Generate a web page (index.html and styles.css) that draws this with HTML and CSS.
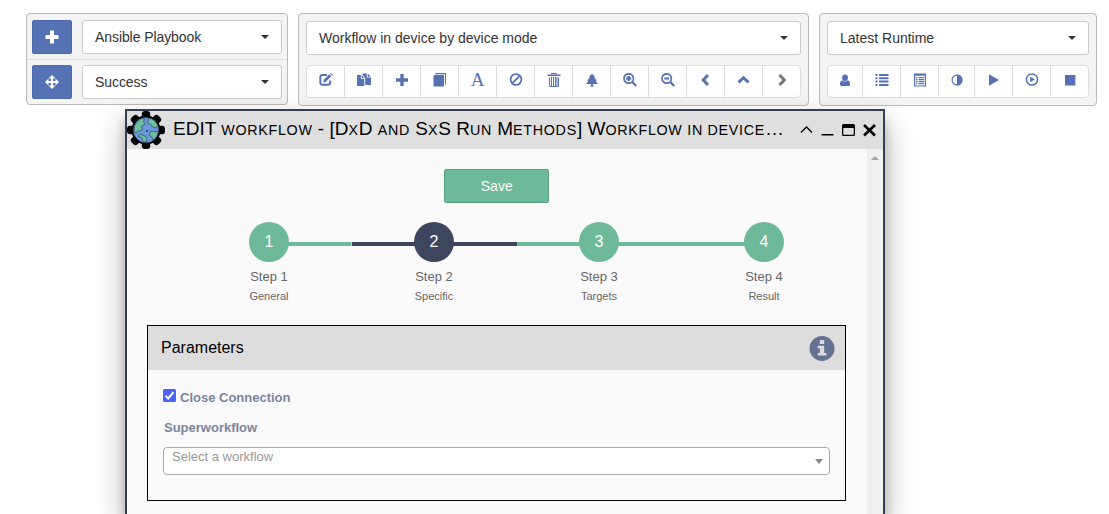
FILE: index.html
```
<!DOCTYPE html>
<html lang="en">
<head>
<meta charset="utf-8">
<title>Edit workflow</title>
<link rel="stylesheet" href="styles.css">
</head>
<body>
<div class="toolbar">
  <section class="panel panel-creation">
    <div class="row">
      <button class="primary"><svg width="14" height="14" viewBox="0 0 14 14"><path d="M5 .5h4V5h4.500v4H9v4.500H5V9H.5V5H5z"/></svg></button>
      <div class="select">Ansible Playbook<i class="caret"></i></div>
    </div>
    <div class="row">
      <button class="primary"><svg width="14" height="14" viewBox="0 0 14 14"><path d="M7 0l3.500 3.500H8V6h2.500V3.500L14 7l-3.500 3.500V8H8v2.500h2.500L7 14l-3.500-3.500H6V8H3.500v2.500L0 7l3.500-3.500V6H6V3.500H3.500z"/></svg></button>
      <div class="select">Success<i class="caret"></i></div>
    </div>
  </section>

  <section class="panel panel-workflow">
    <div class="select">Workflow in device by device mode<i class="caret"></i></div>
    <div class="group">
      <button><svg width="14" height="14" viewBox="0 0 14 14"><path class="line" stroke-width="1.900" d="M8 2H3.500Q1.300 2 1.300 4v5.500q0 2.200 2.200 2.200h5.500q2.200 0 2.200-2.200V7.500"/><path d="M4.800 6.800L10.300 1.300l2 2L6.800 8.800l-2.600.6zM11 .6l.9-.6L14 1.900l-.9.9z"/></svg></button>
      <button><svg width="14" height="14" viewBox="0 0 14 14"><path d="M0 2h3.800v3.800h3.500V13H0zM4.600 2.200L7.200 5H4.600zM5.500.5h4.300v4H14V12H8.200V5L5.500 2zM10.700.5L14 3.700h-3.300z"/></svg></button>
      <button><svg width="14" height="14" viewBox="0 0 14 14"><path d="M5.300 1h3.400v4.300H13v3.400H8.700V13H5.300V8.700H1V5.300h4.300z"/></svg></button>
      <button><svg width="14" height="14" viewBox="0 0 14 14"><path d="M2.200 0H13v11.500h-1V1.200H2.200zM.5 3q0-1 1-1H11v11.500H1.500q-1 0-1-1z"/></svg></button>
      <button class="letter">A</button>
      <button><svg width="14" height="14" viewBox="0 0 14 14"><circle class="line" cx="7" cy="6.500" r="5.400" stroke-width="1.800"/><path class="line" stroke-width="1.800" d="M3.300 10.200l7.400-7.400"/></svg></button>
      <button><svg width="14" height="14" viewBox="0 0 14 14"><path class="line" stroke-width="1" d="M4.500 1.500V.5h5v1M2.500 4.500V13q0 .5.500.5h8q.5 0 .5-.5V4.500M4.500 4v9M6.500 4v9M8.500 4v9M10 4v9"/><path d="M.5 1.600h13V3H.5z"/></svg></button>
      <button><svg width="14" height="14" viewBox="0 0 14 14"><path d="M7 .5l3.300 3.800H9l3 3.500h-1.500L13 11H8v1.500l1.500 1h-5l1.500-1V11H1l2.500-3.200H2l3-3.500H3.700z"/></svg></button>
      <button><svg width="14" height="14" viewBox="0 0 14 14"><circle class="line" cx="5.700" cy="5.500" r="4.700" stroke-width="1.700"/><path class="line" stroke-width="2.200" d="M9.200 9l4 4"/><path d="M4.500 3h2.400v1.300h1.300v2.400H6.900V8H4.500V6.700H3.200V4.300h1.300z"/></svg></button>
      <button><svg width="14" height="14" viewBox="0 0 14 14"><circle class="line" cx="5.700" cy="5.500" r="4.700" stroke-width="1.700"/><path class="line" stroke-width="2.200" d="M9.200 9l4 4M3.300 5.500h4.800"/></svg></button>
      <button><svg width="14" height="14" viewBox="0 0 14 14"><path class="line" stroke-width="3" d="M9 2L4.200 7 9 12"/></svg></button>
      <button><svg width="14" height="14" viewBox="0 0 14 14"><path class="line" stroke-width="3" d="M1.500 9.300l5-4.600 5 4.600"/></svg></button>
      <button class="muted"><svg width="14" height="14" viewBox="0 0 14 14"><path class="line" stroke-width="3" d="M4.500 2l4.800 5-4.800 5"/></svg></button>
    </div>
  </section>

  <section class="panel panel-runtime">
    <div class="select">Latest Runtime<i class="caret"></i></div>
    <div class="group">
      <button><svg width="14" height="14" viewBox="0 0 14 14"><ellipse cx="7" cy="4.700" rx="2.900" ry="3.200"/><path d="M4.200 7.200q2.800 2.400 5.600 0 2.200.5 2.200 3.300v1q0 1.500-1.500 1.500h-7Q2 13 2 11.500v-1q0-2.800 2.200-3.300z"/></svg></button>
      <button><svg width="14" height="14" viewBox="0 0 14 14"><path d="M.5 1h2v2h-2zM4 1h9.500v2H4zM.5 4.300h2v2h-2zM4 4.300h9.500v2H4zM.5 7.600h2v2h-2zM4 7.600h9.500v2H4zM.5 11h2v2h-2zM4 11h9.500v2H4z"/></svg></button>
      <button><svg width="14" height="14" viewBox="0 0 14 14"><path fill-rule="evenodd" d="M1 .5h12v13H1zM2.200 2.700v9.700h9.600V2.700z"/><path d="M3 4h1.500v1.300H3zM5.500 4H11v1.300H5.500zM3 6h1.500v1.300H3zM5.500 6H11v1.300H5.500zM3 8h1.500v1.300H3zM5.500 8H11v1.300H5.500zM3 10h1.500v1.300H3zM5.500 10H11v1.300H5.500z"/></svg></button>
      <button><svg width="14" height="14" viewBox="0 0 14 14"><circle class="line" cx="7" cy="7" r="4.900" stroke-width="1.200"/><path d="M7 1.500a5.500 5.500 0 0 1 0 11z"/></svg></button>
      <button><svg width="14" height="14" viewBox="0 0 14 14"><path d="M2 1.200L12 7 2 12.800z"/></svg></button>
      <button><svg width="14" height="14" viewBox="0 0 14 14"><circle class="line" cx="7" cy="6.500" r="5.600" stroke-width="1.500"/><path d="M5.200 3.800L9.800 6.500 5.200 9.200z"/></svg></button>
      <button><svg width="14" height="14" viewBox="0 0 14 14"><path d="M2 2h10.400v10.400H2z"/></svg></button>
    </div>
  </section>
</div>

<div class="dialog">
  <header class="titlebar">
    <svg class="logo" width="38" height="38" viewBox="0 0 38 38">
      <g fill="#050608">
        <circle cx="19" cy="19" r="14.500"/>
        <rect id="tooth" x="14.800" y="0" width="8.400" height="38" rx="3"/>
        <use href="#tooth" transform="rotate(45 19 19)"/>
        <use href="#tooth" transform="rotate(90 19 19)"/>
        <use href="#tooth" transform="rotate(135 19 19)"/>
      </g>
      <circle cx="19" cy="19" r="12.600" fill="#6b98dc"/>
      <g fill="#70c0a0" stroke="#20364f" stroke-width=".6">
        <path d="M7.500 15q2-5 7-7.500l3 .5-1 3 2 2-4 2 1 4-4 1-3 2-1.500-3z"/>
        <path d="M21 7q7 1 9.500 7l-1 3-4-1-2-3-3-1 1-3z"/>
        <path d="M16 31l-1-4-4-2 2-2 5 2 2 3-1 3z"/>
        <path d="M31 20q0 6-5 9l-1-3-3-2 2-4 4 1z"/>
      </g>
      <circle cx="20" cy="20" r="1" fill="#20364f"/>
    </svg>
    <h1>EDIT <span>workflow</span> - [D<span>x</span>D <span>and</span> S<span>x</span>S R<span>un</span> M<span>ethods</span>] W<span>orkflow in device</span>…</h1>
    <svg class="controls" width="80" height="16" viewBox="0 0 80 16">
      <path d="M3 10.500L8.500 5 14 10.500" fill="none" stroke="#000" stroke-width="1.300"/>
      <path d="M23.500 12h12v1.500h-12z"/>
      <path fill-rule="evenodd" d="M45.500 2h10q1.500 0 1.500 1.500v9q0 1.500-1.500 1.500h-10Q44 14 44 12.500v-9Q44 2 45.500 2zM45.300 6v6.700h10.400V6z"/>
      <path d="M66 3l11 10.500M77 3L66 13.500" fill="none" stroke="#000" stroke-width="2.600"/>
    </svg>
  </header>
  <div class="viewport">
    <main class="content">
      <button class="save">Save</button>
      <ol class="steps">
        <li><b>1</b><span>Step 1</span><small>General</small></li>
        <li class="active"><b>2</b><span>Step 2</span><small>Specific</small></li>
        <li><b>3</b><span>Step 3</span><small>Targets</small></li>
        <li><b>4</b><span>Step 4</span><small>Result</small></li>
      </ol>
      <section class="parameters">
        <h2>Parameters
          <svg width="26" height="26" viewBox="0 0 26 26"><circle cx="13" cy="13.500" r="12.500" fill="#667292"/><path fill="#ddd" d="M10.800 5h4.400v4h-4.400zM8.700 10.800h6.500V18h2.200v2.500H8.700V18h2.200v-4.700H8.700z"/></svg>
        </h2>
        <div class="fields">
          <div class="check">
            <svg width="13" height="13" viewBox="0 0 13 13"><rect width="13" height="13" rx="1.500" fill="#4c63fb"/><path d="M2.500 6.700l2.700 2.700 5.300-6.300" fill="none" stroke="#fff" stroke-width="2"/></svg>
            <label>Close Connection</label>
          </div>
          <label class="label">Superworkflow</label>
          <div class="combo">Select a workflow<i></i></div>
        </div>
      </section>
    </main>
    <div class="scrollbar"><i></i></div>
  </div>
</div>
</body>
</html>
```
FILE: styles.css
```
* { box-sizing: border-box; }
body {
  margin: 0;
  height: 514px;
  overflow: hidden;
  position: relative;
  background: #fff;
  color: #333;
  font-family: "Liberation Sans", Arial, sans-serif;
}
button { font-family: inherit; margin: 0; padding: 0; }
svg { display: block; flex: none; }

.toolbar {
  display: flex;
  align-items: flex-start;
  padding: 13px 0 0 26px;
}
.panel {
  background: #f4f4f4;
  border: 1px solid #b9b9b9;
  border-radius: 4px;
}
.panel-creation { width: 262px; height: 92px; margin-right: 10px; }
.panel-workflow { width: 511px; height: 93px; margin-right: 10px; padding: 7px; }
.panel-runtime { width: 278px; height: 93px; padding: 7px; }
.row {
  display: flex;
  gap: 10px;
  height: 45px;
  padding: 6px 5px 4px;
}
.row + .row { border-top: 1px solid #ddd; padding-top: 5px; }
.row .select { flex: 1; }
.primary {
  width: 40px;
  height: 34px;
  display: flex;
  align-items: center;
  justify-content: center;
  border: 1px solid #4a6bab;
  border-radius: 2px;
  background: #5572b5;
  fill: #fff;
}
.select {
  display: flex;
  align-items: center;
  justify-content: space-between;
  height: 34px;
  padding: 0 12px;
  border: 1px solid #ccc;
  border-radius: 3px;
  background: #fff;
  font-size: 14px;
}
.row .select { letter-spacing: -.08px; }
.caret {
  border: 4px solid transparent;
  border-top-color: #333;
  border-bottom: 0;
}
.group {
  display: flex;
  height: 33px;
  margin-top: 10px;
  border: 1px solid #ddd;
  border-radius: 4px;
  background: #fff;
  overflow: hidden;
}
.group button {
  flex: 1;
  display: flex;
  align-items: center;
  justify-content: center;
  border: 0;
  border-right: 1px solid #ddd;
  background: none;
  color: #5572b5;
  fill: currentColor;
  padding-bottom: 3px;
}
.group button:last-child { border-right: 0; }
.group .muted { color: #777; }
.group .letter { font: 19px "Liberation Serif", serif; }
.panel-runtime .group button:first-child { flex: 0 0 35px; }
.panel-runtime .group button:nth-child(4) { flex: 0 0 36px; }
.line { fill: none; stroke: currentColor; }

.dialog {
  position: absolute;
  left: 125px;
  top: 109px;
  width: 760px;
  height: 405px;
  border: 2px solid #343f57;
  border-bottom: 0;
  background: #fafafa;
  box-shadow: 0 14px 28px rgba(0, 0, 0, .3), 0 10px 10px rgba(0, 0, 0, .18);
}
.titlebar {
  display: flex;
  align-items: center;
  height: 38px;
  background: #dfdfdf;
}
.titlebar h1 {
  width: 620px;
  margin: 0 0 2px 8px;
  color: #000;
  font-size: 19px;
  font-weight: 400;
  line-height: 24px;
  white-space: nowrap;
}
.titlebar h1 span { font-size: 14.3px; letter-spacing: .7px; text-transform: uppercase; }
.controls { margin-left: 5px; }
.viewport { display: flex; height: 365px; }
.content { flex: 1; padding: 20px 20px 0; }
.save {
  display: block;
  width: 105px;
  height: 34px;
  margin: 0 auto;
  border: 1px solid #5aa182;
  border-radius: 2px;
  background: #6eb99a;
  color: #fff;
  font-size: 14px;
}
.steps {
  display: flex;
  width: 660px;
  margin: 19px 0 0 39.5px;
  padding: 0;
  list-style: none;
}
.steps li {
  flex: 1;
  display: flex;
  flex-direction: column;
  align-items: center;
  color: #666;
  background: linear-gradient(#6eb99a, #6eb99a) 0 20px / 100% 4px no-repeat;
}
.steps li:first-child { background-position: 100% 20px; background-size: 50% 4px; }
.steps li:last-child { background-size: 50% 4px; }
.steps .active { background-image: linear-gradient(#3d465d, #3d465d); }
.steps b {
  width: 40px;
  height: 40px;
  border-radius: 50%;
  background: #6eb99a;
  color: #fff;
  font-size: 16px;
  font-weight: 400;
  line-height: 40px;
  text-align: center;
}
.steps .active b { background: #3d465d; }
.steps span { margin-top: 6px; font-size: 13px; line-height: 18px; }
.steps small { margin-top: 3px; font-size: 11px; line-height: 14px; }

.parameters {
  width: 699px;
  height: 176px;
  margin-top: 22px;
  border: 1px solid #000;
}
.parameters h2 {
  display: flex;
  align-items: center;
  justify-content: space-between;
  height: 44px;
  margin: 0;
  padding: 0 10px 0 13px;
  background: #ddd;
  color: #000;
  font-size: 16px;
  font-weight: 400;
}
.fields { padding: 19px 15px; color: #7c859e; font-size: 13px; }
.check { display: flex; gap: 4px; height: 17px; }
.fields label { font-weight: 700; line-height: 18px; }
.fields .label { display: block; margin: 13px 0 10px 1px; }
.combo {
  display: flex;
  justify-content: space-between;
  height: 28px;
  padding: 1px 6px 0 8px;
  border: 1px solid #aaa;
  border-radius: 4px;
  background: #fff;
  color: #999;
  line-height: 16px;
}
.combo i {
  height: 5px;
  margin-top: 10px;
  border: 4px solid transparent;
  border-top: 5px solid #888;
  border-bottom: 0;
}
.scrollbar { width: 17px; padding: 7px 4px; background: #f0f0f0; }
.scrollbar i {
  display: block;
  border: 4px solid transparent;
  border-top: 0;
  border-bottom-color: #a3a3a3;
}
```
